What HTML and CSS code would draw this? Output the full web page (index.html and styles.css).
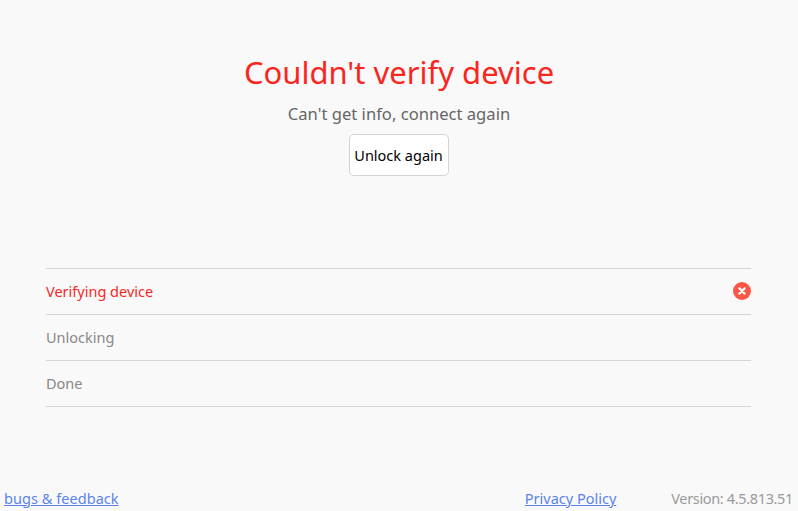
FILE: index.html
```html
<!DOCTYPE html>
<html lang="en">
<head>
<meta charset="utf-8">
<title>Couldn't verify device</title>
<link rel="stylesheet" href="styles.css">
</head>
<body>
<main class="page">
  <header class="status">
    <h1 class="status-title">Couldn't verify device</h1>
    <p class="status-text">Can't get info, connect again</p>
    <button class="status-button" type="button">Unlock again</button>
  </header>
  <ul class="steps">
    <li class="step step-error">
      <span>Verifying device</span>
      <svg class="step-icon" viewBox="0 0 18 18" width="18" height="18" aria-hidden="true">
        <circle cx="9" cy="9" r="9" fill="#fb5545"/>
        <path d="M6.4 6.4l5.2 5.2M11.6 6.4l-5.2 5.2" stroke="#fff" stroke-width="2.2" stroke-linecap="round"/>
      </svg>
    </li>
    <li class="step">Unlocking</li>
    <li class="step">Done</li>
  </ul>
  <footer class="footer">
    <a class="footer-link footer-feedback" href="#">bugs &amp; feedback</a>
    <a class="footer-link" href="#">Privacy Policy</a>
    <span class="footer-version">Version: 4.5.813.51</span>
  </footer>
</main>
</body>
</html>
```

FILE: styles.css
```css
* {
  box-sizing: border-box;
}

html,
body {
  margin: 0;
  height: 100%;
}

body {
  background: #f9f9f9;
  font-family: "Noto Sans", "Open Sans", sans-serif;
  overflow: hidden;
}

.page {
  height: 511px;
  display: flex;
  flex-direction: column;
}

.status {
  display: flex;
  flex-direction: column;
  align-items: center;
  padding-top: 50px;
  height: 268px;
}

.status-title {
  margin: 0;
  font-size: 31px;
  line-height: 44px;
  font-weight: 400;
  color: #f9261e;
}

.status-text {
  margin: 9px 0 0;
  font-size: 16.6px;
  line-height: 22px;
  color: #666;
}

.status-button {
  margin-top: 9px;
  margin-left: -1px;
  width: 100px;
  height: 42px;
  padding: 0;
  background: #fff;
  border: 1px solid #d4d4d4;
  border-radius: 5px;
  font: inherit;
  font-size: 14.5px;
  color: #000;
}

.steps {
  list-style: none;
  margin: 0 47px 0 46px;
  padding: 0;
  border-top: 1px solid #d5d5d5;
}

.step {
  height: 46px;
  padding-bottom: 2px;
  display: flex;
  align-items: center;
  justify-content: space-between;
  border-bottom: 1px solid #d5d5d5;
  font-size: 14.5px;
  color: #888;
}

.step-error {
  color: #f9261e;
}

.footer {
  margin-top: auto;
  height: 25px;
  padding: 0 5px 2px 4px;
  display: flex;
  align-items: center;
  font-size: 14.5px;
}

.footer-link {
  color: #5b84e8;
  text-decoration: underline;
}

.footer-feedback {
  margin-right: auto;
  letter-spacing: 0.05px;
}

.footer-version {
  margin-left: 55px;
  letter-spacing: -0.35px;
  color: #999;
}
```
